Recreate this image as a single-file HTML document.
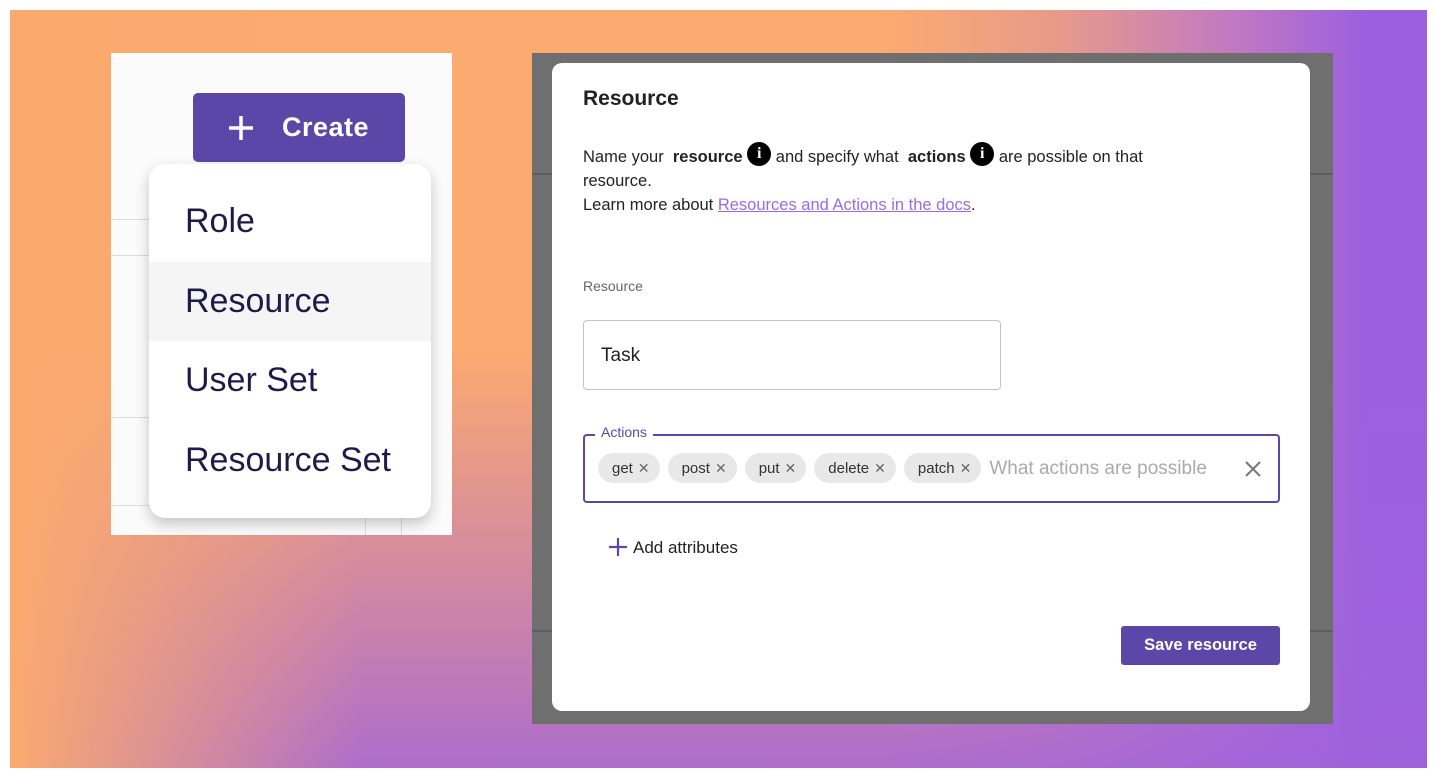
<!DOCTYPE html>
<html><head><style>
*{box-sizing:border-box;margin:0;padding:0}
body{width:1437px;height:778px;background:#fff;position:relative;overflow:hidden;font-family:"Liberation Sans",sans-serif}
.bg{position:absolute;left:10px;top:10px;width:1417px;height:758px;background:
 linear-gradient(to right,rgba(251,170,110,1) 0%,rgba(251,170,110,0) 25%),
 linear-gradient(to bottom,rgba(160,98,220,0) 45%,rgba(160,98,220,.85) 100%),
 linear-gradient(to right,#fbaa70 0%,#fbaa70 62%,#e79a8a 74%,#c27ac0 86%,#9b5fe0 96%)}
.left{position:absolute;left:111px;top:53px;width:341px;height:482px;background:#fbfbfc;overflow:hidden}
.left .ln{position:absolute;left:0;height:1px;background:#dcdcdc;width:60px}
.btn{position:absolute;left:193px;top:93px;width:212px;height:69px;background:#5a47a8;border-radius:5px;color:#fff;font-size:27px;font-weight:bold;letter-spacing:0.5px}
.menu{position:absolute;left:149px;top:164px;width:282px;height:354px;background:#fff;border-radius:16px;box-shadow:0 6px 14px rgba(0,0,0,.22)}
.mi{position:absolute;left:0;width:282px;height:79px;font-size:34px;color:#1f1a4a;padding-left:36px;line-height:79px}
.back{position:absolute;left:532px;top:53px;width:801px;height:671px;background:#6f6f6f}
.back .l{position:absolute;left:0;width:801px;height:2px;background:#5e5e5e}
.modal{position:absolute;left:552px;top:63px;width:758px;height:648px;background:#fff;border-radius:10px;color:#222}
.info{display:inline-block;width:24px;height:24px;border-radius:50%;background:#000;color:#fff;font-size:16px;font-weight:bold;text-align:center;line-height:24px;vertical-align:top;margin-top:-3px;font-family:"Liberation Serif",serif}
.chip{display:inline-block;height:30px;line-height:30px;background:#e8e8e8;border-radius:15px;padding:0 10px 0 14px;font-size:15px;color:#333;margin-right:8px}
.chip span{color:#666;margin-left:5px;font-size:14px}
</style></head><body>
<div class="bg"></div>
<div class="left">
 <div class="ln" style="top:166px"></div><div class="ln" style="top:202px"></div><div class="ln" style="top:364px"></div><div class="ln" style="top:452px"></div>
 <div style="position:absolute;left:254px;top:420px;width:1px;height:62px;background:#ddd"></div>
 <div style="position:absolute;left:290px;top:420px;width:1px;height:62px;background:#ddd"></div>
</div>
<div class="btn"><svg style="position:absolute;left:34px;top:21px" width="28" height="28"><path d="M14 2V26M2 14H26" stroke="#fff" stroke-width="3.5"/></svg><span style="position:absolute;left:89px;top:19px">Create</span></div>
<div class="menu">
 <div class="mi" style="top:18px">Role</div>
 <div class="mi" style="top:98px;background:#f5f5f5">Resource</div>
 <div class="mi" style="top:177px">User Set</div>
 <div class="mi" style="top:257px">Resource Set</div>
</div>
<div class="back"><div class="l" style="top:120px"></div><div class="l" style="top:577px"></div></div>
<div class="modal">
 <div style="position:absolute;left:31px;top:24px;font-size:21px;font-weight:bold;color:#222">Resource</div>
 <div style="position:absolute;left:31px;top:82px;width:615px;font-size:16.5px;line-height:24px;color:#222">Name your &nbsp;<b>resource</b> <span class="info">i</span> and specify what &nbsp;<b>actions</b> <span class="info">i</span> are possible on that resource.<br>Learn more about <span style="color:#9a6ae8;text-decoration:underline">Resources and Actions in the docs</span>.</div>
 <div style="position:absolute;left:31px;top:215px;font-size:14px;color:#666">Resource</div>
 <div style="position:absolute;left:31px;top:257px;width:418px;height:70px;border:1px solid #c4c4c4;border-radius:4px;font-size:19px;padding:24px 0 0 17px;color:#222">Task</div>
 <div style="position:absolute;left:31px;top:371px;width:697px;height:69px;border:2px solid #5a47a8;border-radius:4px"></div>
 <div style="position:absolute;left:43px;top:361px;padding:0 6px;background:#fff;font-size:14px;color:#5a47a8">Actions</div>
 <div style="position:absolute;left:46px;top:390px;white-space:nowrap">
  <span class="chip">get<span>✕</span></span><span class="chip">post<span>✕</span></span><span class="chip">put<span>✕</span></span><span class="chip">delete<span>✕</span></span><span class="chip">patch<span>✕</span></span><span style="font-size:19px;color:#aaa;vertical-align:-1px">What actions are possible</span>
 </div>
 <svg style="position:absolute;left:693px;top:398px" width="16" height="16"><path d="M1 1L15 15M15 1L1 15" stroke="#777" stroke-width="2"/></svg>
 <svg style="position:absolute;left:57px;top:475px" width="18" height="18"><path d="M9 0V18M0 9H18" stroke="#5a47a8" stroke-width="2.2"/></svg>
 <div style="position:absolute;left:81px;top:475px;font-size:17px;color:#222">Add attributes</div>
 <div style="position:absolute;left:569px;top:563px;width:159px;height:39px;background:#5a47a8;border-radius:3px;color:#fff;font-size:16.5px;font-weight:bold;text-align:center;line-height:39px">Save resource</div>
</div>
</body></html>
